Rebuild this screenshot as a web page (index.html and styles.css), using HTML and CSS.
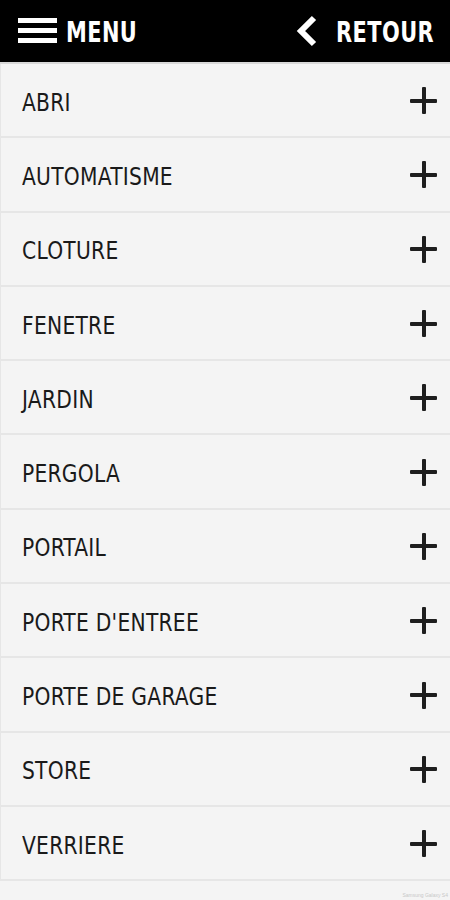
FILE: index.html
```html
<!DOCTYPE html>
<html lang="fr">
<head>
<meta charset="utf-8">
<title>Menu</title>
<link rel="stylesheet" href="styles.css">
</head>
<body>
<div class="app">
  <header class="topbar">
    <div class="menu-btn">
      <span class="burger"><i></i><i></i><i></i></span>
      <span class="label label-left">MENU</span>
    </div>
    <div class="back-btn">
      <svg class="chev" width="22" height="32" viewBox="0 0 22 32"><path d="M18 3 L5 16 L18 29" fill="none" stroke="#fff" stroke-width="6" stroke-linecap="butt" stroke-linejoin="miter"/></svg>
      <span class="label label-right">RETOUR</span>
    </div>
  </header>
  <ul class="list">
    <li class="row"><span class="txt">ABRI</span><b class="plus"></b></li>
    <li class="row"><span class="txt">AUTOMATISME</span><b class="plus"></b></li>
    <li class="row"><span class="txt">CLOTURE</span><b class="plus"></b></li>
    <li class="row"><span class="txt">FENETRE</span><b class="plus"></b></li>
    <li class="row"><span class="txt">JARDIN</span><b class="plus"></b></li>
    <li class="row"><span class="txt">PERGOLA</span><b class="plus"></b></li>
    <li class="row"><span class="txt">PORTAIL</span><b class="plus"></b></li>
    <li class="row"><span class="txt">PORTE D'ENTREE</span><b class="plus"></b></li>
    <li class="row"><span class="txt">PORTE DE GARAGE</span><b class="plus"></b></li>
    <li class="row"><span class="txt">STORE</span><b class="plus"></b></li>
    <li class="row"><span class="txt">VERRIERE</span><b class="plus"></b></li>
  </ul>
  <div class="foot"><span class="mark">Samsung Galaxy S4</span></div>
</div>
</body>
</html>
```
FILE: styles.css
```css
* { box-sizing: border-box; }
html, body { margin: 0; padding: 0; }
body {
  width: 450px;
  height: 900px;
  overflow: hidden;
  background: #f4f4f4;
  font-family: "DejaVu Sans Condensed", "DejaVu Sans", sans-serif;
}
.app { display: flex; flex-direction: column; height: 900px; }
.topbar {
  height: 62px;
  background: #000;
  color: #fff;
  display: flex;
  align-items: center;
  justify-content: space-between;
  padding: 0 16px 0 18px;
  border-bottom: 2px solid #d8d8d8;
  box-sizing: content-box;
}
.menu-btn, .back-btn { display: flex; align-items: center; }
.burger { display: flex; flex-direction: column; gap: 5px; width: 39px; margin-right: 9px; margin-top: -1px; }
.burger i { display: block; height: 5px; background: #fff; }
.label {
  font-size: 28px;
  font-weight: bold;
  letter-spacing: 0.5px;
  line-height: 1;
  display: inline-block;
  margin-top: 4px;
}
.label-left { transform: scaleX(0.83); transform-origin: left center; }
.label-right { transform: scaleX(0.83); transform-origin: right center; }
.chev { margin-right: -2px; }
.list { list-style: none; margin: 0; padding: 0; border-left: 1px solid #e6e6e6; }
.row {
  height: 74.3px;
  display: flex;
  align-items: center;
  justify-content: space-between;
  padding: 4px 13px 0 21px;
  border-bottom: 2px solid #e6e6e6;
  color: #1a1a1a;
  font-size: 25px;
  letter-spacing: 0.3px;
}
.txt { display: inline-block; transform: scaleX(0.9); transform-origin: left center; }
.plus { position: relative; width: 27px; height: 27px; display: block; margin-top: -3px; }
.plus::before, .plus::after {
  content: "";
  position: absolute;
  background: #1e1e1e;
  border-radius: 1px;
}
.plus::before { left: 0; right: 0; top: 11.5px; height: 4px; }
.plus::after { top: 0; bottom: 0; left: 11.5px; width: 4px; }
.foot { flex: 1; display: flex; justify-content: flex-end; align-items: flex-end; padding: 0 2px 2px 0; }
.mark { font-family: "Liberation Sans", sans-serif; font-size: 5px; color: #c8c8c8; }
```
